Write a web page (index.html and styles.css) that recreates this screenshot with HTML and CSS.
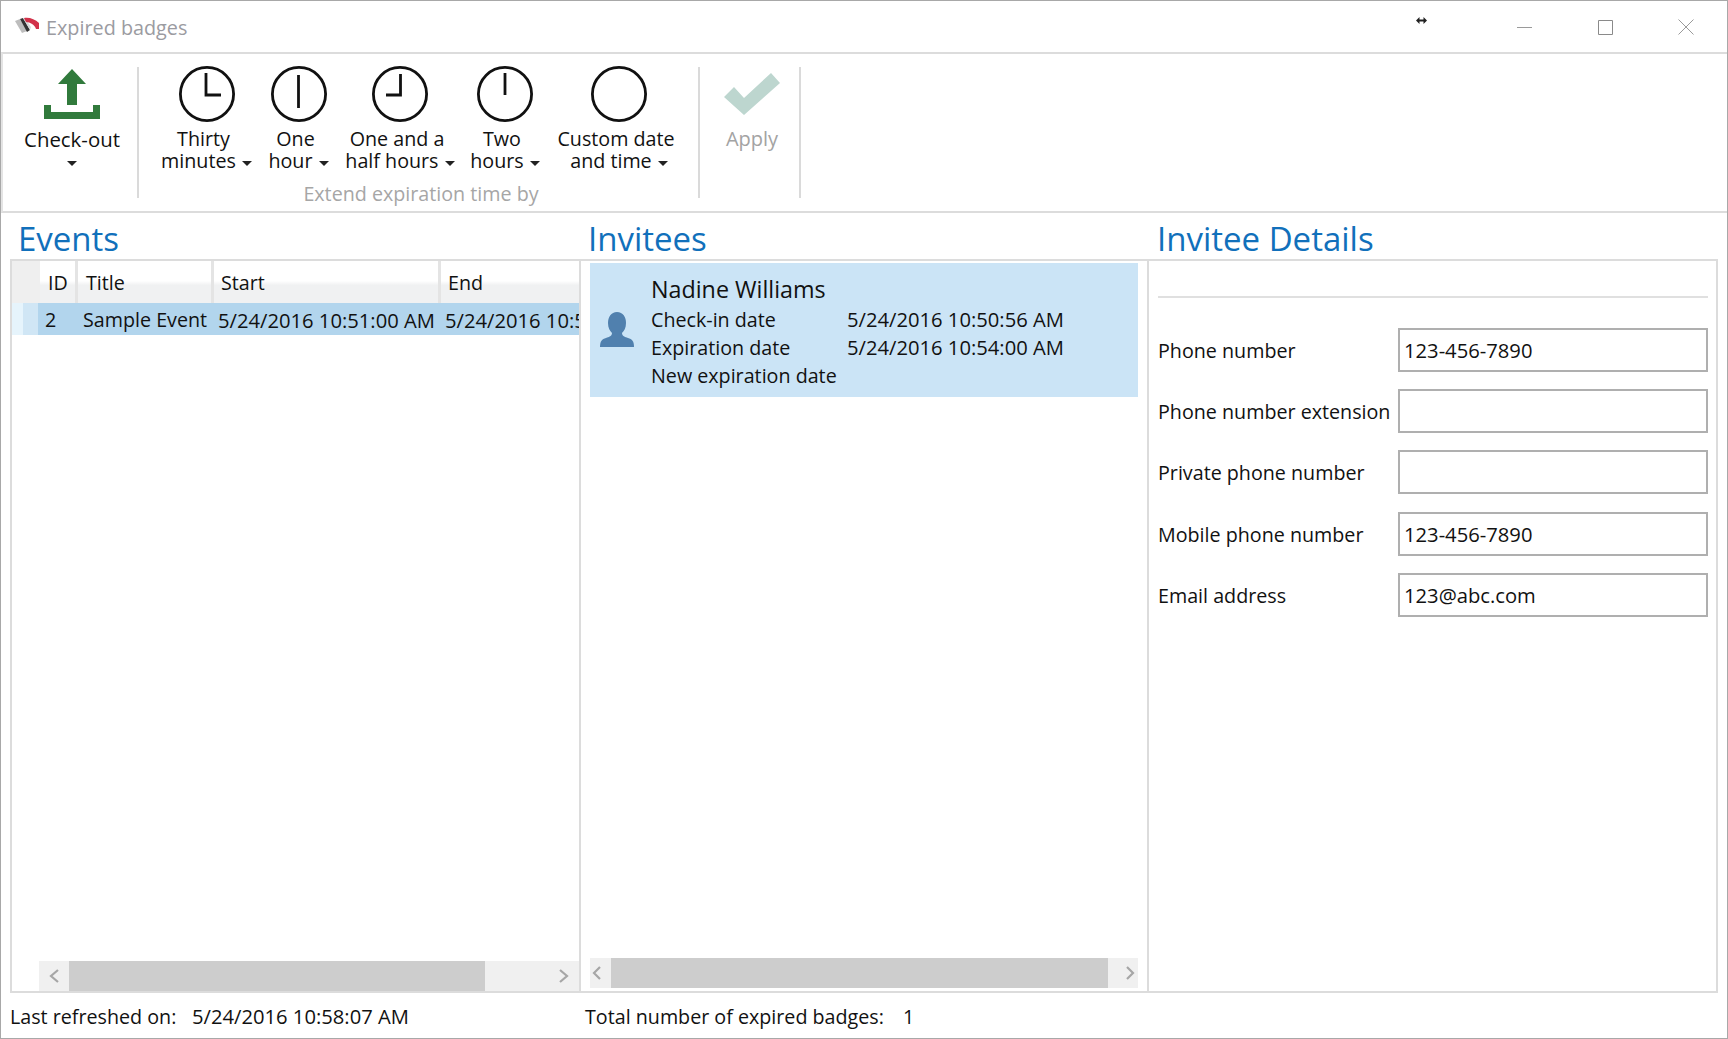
FILE: index.html
```html
<!DOCTYPE html>
<html lang="en">
<head>
<meta charset="utf-8">
<title>Expired badges</title>
<link rel="stylesheet" href="styles.css">
</head>
<body>
<div class="window">
  <header class="titlebar">
    <svg class="logo" viewBox="0 0 25 17" width="25" height="17">
      <path d="M0 4 L5 2 L12 14 L7 16 Z" fill="#bdbdbd"/>
      <path d="M5 2 L8 1 L15 13 L12 15 Z" fill="#333"/>
      <path d="M8 1 L10 1 L16 10 L15 13 Z" fill="#d8d8d8"/>
      <path d="M9 1 C14 0 20 2 24 6 L24 12 L21 12 C20 8 15 5 11 5 Z" fill="#d2324a"/>
    </svg>
    <span class="title">Expired badges</span>
    <svg class="cursor-icon" viewBox="0 0 11 7" width="11" height="7"><path d="M0 3.5 L3.5 0 V2.5 H7.5 V0 L11 3.5 L7.5 7 V4.5 H3.5 V7 Z" fill="#222"/></svg>
    <div class="caption-buttons">
      <svg viewBox="0 0 16 16" width="16" height="16"><path d="M1 8.5 H16" stroke="#9a9a9a" fill="none"/></svg>
      <svg viewBox="0 0 16 16" width="16" height="16"><path d="M1.5 1.5 H15.5 V15.5 H1.5 Z" stroke="#8a8a8a" fill="none"/></svg>
      <svg viewBox="0 0 16 16" width="16" height="16"><path d="M0.5 0.5 L15.5 15.5 M15.5 0.5 L0.5 15.5" stroke="#9a9a9a" fill="none"/></svg>
    </div>
  </header>

  <section class="ribbon">
    <div class="rb rb-checkout">
      <svg class="rb-icon" viewBox="0 0 56 56" width="56" height="56">
        <path d="M28 3 L42 18 H33 V39 H23 V18 H14 Z" fill="#317a3c"/>
        <path d="M0 39 H7 V46 H49 V39 H56 V53 H0 Z" fill="#317a3c"/>
      </svg>
      <div class="rb-label wide">Check-out</div>
      <div class="rb-label"><i class="caret caret-solo"></i></div>
    </div>
    <div class="rb-sep"></div>
    <div class="rb-group">
      <div class="rb-row">
        <div class="rb rb-w1">
          <svg class="rb-icon" viewBox="0 0 56 56" width="56" height="56"><circle cx="28" cy="28" r="26.6" class="clock"/><path d="M27 7 V29 H42" class="hand"/></svg>
          <div class="rb-label top">Thirty</div>
          <div class="rb-label">minutes <i class="caret"></i></div>
        </div>
        <div class="rb rb-w2">
          <svg class="rb-icon" viewBox="0 0 56 56" width="56" height="56"><circle cx="28" cy="28" r="26.6" class="clock"/><path d="M27.5 9 V42" class="hand"/></svg>
          <div class="rb-label top">One</div>
          <div class="rb-label">hour <i class="caret"></i></div>
        </div>
        <div class="rb rb-w3">
          <svg class="rb-icon" viewBox="0 0 56 56" width="56" height="56"><circle cx="28" cy="28" r="26.6" class="clock"/><path d="M28.5 8 V29 H14" class="hand"/></svg>
          <div class="rb-label top">One and a</div>
          <div class="rb-label">half hours <i class="caret"></i></div>
        </div>
        <div class="rb rb-w4">
          <svg class="rb-icon" viewBox="0 0 56 56" width="56" height="56"><circle cx="28" cy="28" r="26.6" class="clock"/><path d="M28 7 V29" class="hand"/></svg>
          <div class="rb-label top">Two</div>
          <div class="rb-label">hours <i class="caret"></i></div>
        </div>
        <div class="rb rb-w5">
          <svg class="rb-icon" viewBox="0 0 56 56" width="56" height="56"><circle cx="28" cy="28" r="26.6" class="clock"/></svg>
          <div class="rb-label top">Custom date</div>
          <div class="rb-label">and time <i class="caret"></i></div>
        </div>
      </div>
      <div class="rb-caption">Extend expiration time by</div>
    </div>
    <div class="rb-sep"></div>
    <div class="rb rb-apply">
      <svg class="rb-icon" viewBox="0 0 56 56" width="56" height="56">
        <path d="M0 31 L10 21 L20 32 L47 7 L56 17 L20 49 Z" fill="#bdd6cf"/>
      </svg>
      <div class="rb-label disabled">Apply</div>
    </div>
    <div class="rb-sep"></div>
  </section>

  <main class="content">
    <section class="col">
      <h2 class="heading">Events</h2>
      <div class="panel panel-events">
        <div class="grid-head">
          <div class="corner"></div>
          <div class="hcell hcell-id">ID</div>
          <div class="hcell hcell-title">Title</div>
          <div class="hcell hcell-start">Start</div>
          <div class="hcell hcell-end">End</div>
        </div>
        <div class="grid-row">
          <div class="row-head"></div>
          <div class="cell cell-id">2</div>
          <div class="cell cell-title">Sample Event</div>
          <div class="cell cell-start num">5/24/2016 10:51:00 AM</div>
          <div class="cell cell-end num">5/24/2016 10:54:00 AM</div>
        </div>
        <div class="spacer"></div>
        <div class="scrollbar scrollbar-events">
          <svg class="chev" viewBox="0 0 30 30" width="30" height="30"><path d="M19 9 L12 15 L19 21" /></svg>
          <div class="thumb thumb-e"></div>
          <div class="track-gap"></div>
          <svg class="chev" viewBox="0 0 30 30" width="30" height="30"><path d="M11 9 L18 15 L11 21" /></svg>
        </div>
      </div>
    </section>

    <section class="col">
      <h2 class="heading heading-inv">Invitees</h2>
      <div class="panel panel-invitees">
        <div class="card">
          <svg class="avatar" viewBox="0 0 36 36" width="36" height="36">
            <path d="M18 0 C24 0 27 5 27 11 C27 16 25 19 23 21 C23 24 26 25 29 26 C33 27 35 29 35 35 H1 C1 29 3 27 7 26 C10 25 13 24 13 21 C11 19 9 16 9 11 C9 5 12 0 18 0 Z" fill="#5080ae"/>
          </svg>
          <div class="card-text">
            <div class="name">Nadine Williams</div>
            <div class="kv"><span class="k">Check-in date</span><span class="num">5/24/2016 10:50:56 AM</span></div>
            <div class="kv"><span class="k">Expiration date</span><span class="num">5/24/2016 10:54:00 AM</span></div>
            <div class="kv"><span class="k">New expiration date</span></div>
          </div>
        </div>
        <div class="spacer"></div>
        <div class="scrollbar scrollbar-invitees">
          <svg class="chev" viewBox="0 0 21 30" width="21" height="30"><path d="M10 9 L4 15 L10 21" /></svg>
          <div class="thumb thumb-i"></div>
          <div class="track-gap"></div>
          <svg class="chev" viewBox="0 0 30 30" width="30" height="30"><path d="M19 9 L25 15 L19 21" /></svg>
        </div>
      </div>
    </section>

    <section class="col">
      <h2 class="heading heading-details">Invitee Details</h2>
      <div class="panel panel-details">
        <div class="rule"></div>
        <form class="fields">
          <div class="field"><label>Phone number</label><div class="input num">123-456-7890</div></div>
          <div class="field"><label>Phone number extension</label><div class="input"></div></div>
          <div class="field"><label>Private phone number</label><div class="input"></div></div>
          <div class="field"><label>Mobile phone number</label><div class="input num">123-456-7890</div></div>
          <div class="field"><label>Email address</label><div class="input num">123@abc.com</div></div>
        </form>
      </div>
    </section>
  </main>

  <footer class="status">
    <div class="status-a"><span class="status-k">Last refreshed on:</span><span class="num">5/24/2016 10:58:07 AM</span></div>
    <div class="status-b"><span class="status-k2">Total number of expired badges:</span><span>1</span></div>
  </footer>
</div>
</body>
</html>
```

FILE: styles.css
```css
* { box-sizing: border-box; }
html, body { margin: 0; padding: 0; background: #fff; }
body {
  font-family: "Open Sans", "Noto Sans", sans-serif;
  font-size: 19.7px;
  color: #111;
  overflow: hidden;
}
.num { font-size: 20.2px; }
.window {
  width: 1728px;
  height: 1039px;
  border: 1px solid #a8a8a8;
  display: flex;
  flex-direction: column;
  background: #fff;
}

/* Title bar */
.titlebar {
  height: 51px;
  flex: none;
  display: flex;
  align-items: center;
  padding-left: 14px;
  position: relative;
}
.logo { flex: none; margin-top: -2px; }
.title { margin-left: 6px; color: #9b9ba1; font-size: 19.8px; margin-top: 2px; }
.cursor-icon { position: absolute; left: 1415px; top: 16px; }
.caption-buttons {
  margin-left: auto;
  display: flex;
  gap: 65px;
  padding-right: 33px;
}

/* Ribbon */
.ribbon {
  height: 161px;
  flex: none;
  display: flex;
  align-items: flex-start;
  border-top: 2px solid #dcdcdc;
  border-bottom: 2px solid #dcdcdc;
  border-left: 2px solid #e4e4e4;
  padding-top: 12px;
  padding-left: 6px;
}
.rb { display: flex; flex-direction: column; align-items: center; flex: none; }
.rb-icon { display: block; margin-bottom: 6px; }
.rb-label { line-height: 22px; height: 22px; white-space: nowrap; }
.rb-label.top { margin-right: 6px; }
.rb-label.wide { font-size: 20.4px; }
.rb-label.disabled { color: #a3a3a3; font-size: 20px; }
.rb-checkout { width: 126px; margin-right: 2px; }
.rb-w1 { width: 103px; }
.rb-w2 { width: 81px; }
.rb-w3 { width: 122px; }
.rb-w4 { width: 88px; }
.rb-w5 { width: 140px; }
.rb-apply { width: 94px; margin-left: 5px; }
.rb-sep {
  flex: none;
  width: 2px;
  height: 131px;
  margin-top: 1px;
  background: #dadada;
}
.rb-group { display: flex; flex-direction: column; padding-left: 16px; flex: none; margin-right: 9px; }
.rb-row { display: flex; }
.rb-caption {
  text-align: center;
  color: #a6a6a6;
  line-height: 22px;
  margin-top: 11px;
  margin-left: -2px;
}
.clock { fill: none; stroke: #111; stroke-width: 2.8; }
.hand { fill: none; stroke: #111; stroke-width: 2.8; }
.caret {
  display: inline-block;
  width: 0;
  height: 0;
  border-left: 5px solid transparent;
  border-right: 5px solid transparent;
  border-top: 5px solid #222;
  vertical-align: 2px;
  margin-left: 1px;
}
.caret-solo { margin-left: 0; }

/* Content */
.content {
  flex: 1;
  min-height: 0;
  display: grid;
  grid-template-columns: 569px 568px 571px;
  padding-left: 9px;
}
.col { display: flex; flex-direction: column; min-width: 0; }
.heading {
  height: 46px;
  flex: none;
  margin: 0;
  padding-left: 8px;
  font-size: 33px;
  line-height: 52px;
  font-weight: 400;
  color: #1170bb;
}
.heading-inv { padding-left: 9px; }
.heading-details { padding-left: 10px; }
.panel {
  flex: 1;
  min-height: 0;
  display: flex;
  flex-direction: column;
  border-top: 2px solid #dcdcdc;
  border-bottom: 2px solid #dcdcdc;
  border-left: 2px solid #dcdcdc;
}
.panel-details { border-right: 2px solid #dcdcdc; }
.spacer { flex: 1; }

/* Events grid */
.grid-head {
  display: grid;
  grid-template-columns: 28px 38px 136px 227px 1fr;
  height: 42px;
  flex: none;
  border-bottom: 3px solid #c9c9c9;
}
.corner { background: #efefef; }
.hcell {
  background: linear-gradient(#ffffff 0, #ffffff 45%, #f0f1f2 55%, #f0f1f2 100%);
  border-right: 3px solid #e4e4e4;
  line-height: 44px;
  white-space: nowrap;
}
.hcell-id { padding-left: 8px; }
.hcell-title { padding-left: 8px; }
.hcell-start { padding-left: 7px; }
.hcell-end { padding-left: 7px; border-right: none; }
.grid-row {
  display: grid;
  grid-template-columns: 26px 41px 135px 227px 1fr;
  height: 32px;
  flex: none;
  background: #b2d5ed;
  overflow: hidden;
  line-height: 34px;
  white-space: nowrap;
}
.row-head { background: linear-gradient(90deg, #e6f4fc 0, #e6f4fc 44%, #d0e6f5 44%, #d0e6f5 100%); }
.cell { overflow: hidden; padding-left: 4px; }
.cell-id { padding-left: 7px; }

/* Scrollbars */
.scrollbar {
  display: flex;
  height: 30px;
  flex: none;
  background: #f0f0f0;
  align-items: stretch;
}
.scrollbar-events { margin-left: 27px; }
.scrollbar-invitees { margin: 0 9px 3px 9px; }
.chev { flex: none; }
.chev path { fill: none; stroke: #a6a6a6; stroke-width: 2.2; }
.track-gap { flex: 1; }
.thumb { background: #cdcdcd; flex: none; }
.thumb-e { width: 416px; }
.thumb-i { width: 497px; }

/* Invitees */
.card {
  margin: 2px 9px 0 9px;
  height: 134px;
  flex: none;
  background: #cbe4f6;
  display: flex;
  align-items: center;
  padding-left: 9px;
}
.avatar { flex: none; margin-right: 16px; }
.card-text { flex: 1; align-self: flex-start; padding-top: 10px; }
.name { font-size: 23.3px; line-height: 32px; height: 33px; }
.kv { display: flex; align-items: baseline; line-height: 28px; height: 28px; }
.kv .num { line-height: 26px; }
.k { width: 196px; flex: none; }

/* Details */
.rule {
  height: 2px;
  flex: none;
  background: #e0e0e0;
  margin: 35px 8px 0 9px;
}
.fields { display: flex; flex-direction: column; gap: 17.2px; padding: 30px 8px 0 9px; }
.field { display: flex; align-items: center; height: 44px; }
.field label { width: 240px; flex: none; white-space: nowrap; margin-top: 1px; }
.input {
  flex: 1;
  height: 44px;
  border: 2px solid #afafaf;
  line-height: 40px;
  padding-left: 4px;
}

/* Status */
.status {
  height: 45px;
  flex: none;
  display: grid;
  grid-template-columns: 575px 1fr;
  align-items: center;
  padding-left: 9px;
  padding-top: 1px;
}
.status-a, .status-b { display: flex; align-items: baseline; white-space: nowrap; }
.status-k { width: 182px; flex: none; }
.status-k2 { width: 318px; flex: none; }
```
